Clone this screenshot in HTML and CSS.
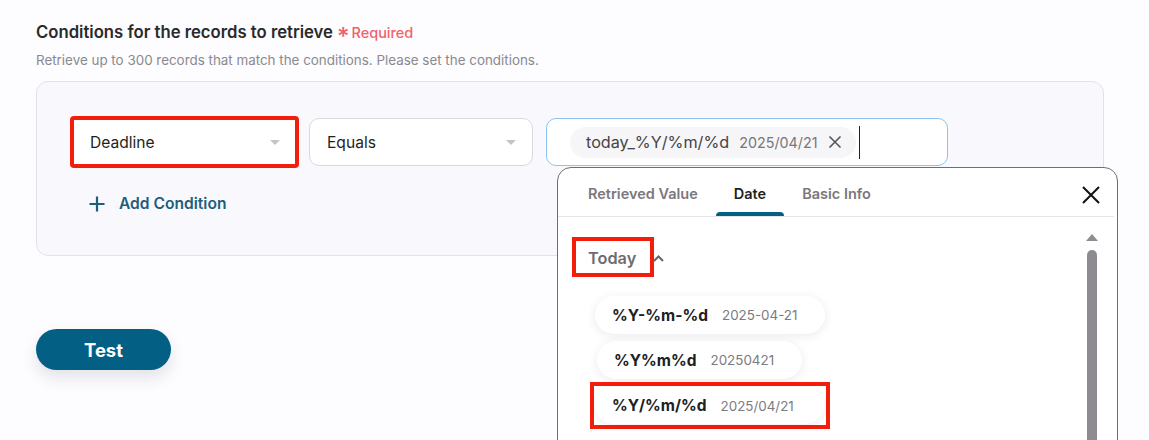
FILE: index.html
```html
<!DOCTYPE html>
<html lang="en">
<head>
<meta charset="utf-8">
<title>Conditions</title>
<link rel="stylesheet" href="styles.css">
</head>
<body>
<div class="page">
  <div class="heading">
    <span class="title">Conditions for the records to retrieve</span>
    <span class="required"><span class="star">*</span>Required</span>
  </div>
  <p class="sub">Retrieve up to 300 records that match the conditions. Please set the conditions.</p>

  <div class="box">
    <div class="row">
      <div class="select select-a highlight">
        <span>Deadline</span>
        <span class="caret"></span>
      </div>
      <div class="select select-b">
        <span>Equals</span>
        <span class="caret"></span>
      </div>
      <div class="value-input">
        <div class="token">
          <span class="token-name">today_%Y/%m/%d</span>
          <span class="token-val">2025/04/21</span>
          <svg class="token-x" width="14" height="14" viewBox="0 0 14 14"><path d="M1.5 1.5 L12.5 12.5 M12.5 1.5 L1.5 12.5" stroke="#555" stroke-width="1.6" fill="none"/></svg>
        </div>
        <span class="cursor"></span>
      </div>
    </div>
    <div class="add">
      <svg width="16" height="16" viewBox="0 0 16 16"><path d="M8 0.5 V15.5 M0.5 8 H15.5" stroke="#1d5e7c" stroke-width="2.2" fill="none"/></svg>
      <span>Add Condition</span>
    </div>
  </div>

  <button class="test">Test</button>

  <div class="popup">
    <div class="tabs">
      <div class="tab">Retrieved Value</div>
      <div class="tab active">Date</div>
      <div class="tab">Basic Info</div>
      <svg class="close" width="18" height="18" viewBox="0 0 18 18"><path d="M1 1 L17 17 M17 1 L1 17" stroke="#111" stroke-width="2" fill="none"/></svg>
    </div>
    <div class="pane">
      <div class="list">
        <div class="group">
          <span class="group-label highlight2">Today</span>
          <svg class="chev" width="11" height="7" viewBox="0 0 11 7"><path d="M1 6 L5.5 1.5 L10 6" stroke="#666" stroke-width="2" fill="none"/></svg>
        </div>
        <div class="chips">
          <div class="chip"><b>%Y-%m-%d</b><span>2025-04-21</span></div>
          <div class="chip"><b>%Y%m%d</b><span>20250421</span></div>
          <div class="chip-wrap"><div class="chip"><b>%Y/%m/%d</b><span>2025/04/21</span></div></div>
        </div>
      </div>
      <div class="scrollbar">
        <span class="arrow"></span>
        <span class="thumb"></span>
      </div>
    </div>
  </div>
</div>
</body>
</html>
```

FILE: styles.css
```css
* { box-sizing: border-box; }
html, body { margin: 0; padding: 0; }
body {
  background: #fdfcfe;
  font-family: Inter, "Noto Sans", sans-serif;
  color: #2b2b2b;
  width: 1149px;
  height: 440px;
  overflow: hidden;
}
.page {
  position: relative;
  padding: 22px 45px 0 36px;
  height: 440px;
}
.heading {
  display: flex;
  align-items: baseline;
  gap: 4px;
  height: 20px;
}
.title {
  font-size: 16.7px;
  font-weight: 600;
  color: #2a2a2c;
}
.required {
  font-size: 14.5px;
  font-weight: 500;
  color: #f2606a;
  display: flex;
  align-items: baseline;
}
.star {
  font-size: 24px;
  line-height: 10px;
  margin-right: 2px;
  position: relative;
  top: 7px;
}
.sub {
  margin: 10px 0 0 0;
  font-size: 13.4px;
  color: #8a8a8e;
  line-height: 16px;
}
.box {
  margin-top: 13px;
  width: 1068px;
  height: 175px;
  background: #f9f8fc;
  border: 1px solid #e3e2e7;
  border-radius: 12px;
  padding: 36px 0 0 35px;
}
.row {
  display: flex;
  gap: 12px;
}
.select {
  height: 48px;
  background: #fff;
  border: 1px solid #d9d8dc;
  border-radius: 10px;
  display: flex;
  align-items: center;
  justify-content: space-between;
  padding: 0 16px 0 17px;
  font-size: 15.6px;
  color: #1f1f22;
}
.select-a { width: 225px; }
.select-b { width: 224px; }
.highlight {
  outline: 4px solid #f31d0b;
  outline-offset: -2px;
  border-radius: 2px;
}
.caret {
  width: 0; height: 0;
  border-left: 5px solid transparent;
  border-right: 5px solid transparent;
  border-top: 5px solid #c4c4c8;
}
.value-input {
  margin-left: 1px;
  width: 402px;
  height: 48px;
  border: 1px solid #8dc3f3;
  border-radius: 10px;
  background: #fff;
  display: flex;
  align-items: center;
  padding-left: 23px;
}
.token {
  height: 31px;
  background: #f6f5f8;
  border-radius: 16px;
  display: flex;
  align-items: center;
  padding: 0 14px 0 16px;
}
.token-name {
  font-size: 16.2px;
  color: #444447;
}
.token-val {
  font-size: 14.3px;
  color: #77767b;
  margin-left: 10px;
}
.token-x { margin-left: 10px; }
.cursor {
  width: 1.5px;
  height: 33px;
  background: #222;
  margin-left: 3px;
}
.add {
  margin-top: 28px;
  margin-left: 17px;
  display: flex;
  align-items: center;
  gap: 14px;
  color: #1d5e7c;
  font-size: 15.6px;
  font-weight: 600;
}
.test {
  margin-top: 73px;
  width: 135px;
  height: 41px;
  border: none;
  border-radius: 21px;
  background: #035f84;
  color: #fff;
  font-family: Inter, sans-serif;
  font-size: 18.4px;
  font-weight: 700;
  box-shadow: 0 8px 16px rgba(40, 40, 80, 0.12);
  display: block;
}
.popup {
  position: absolute;
  left: 557px;
  top: 167px;
  width: 561px;
  height: 290px;
  background: #fff;
  border: 1px solid #6e6d72;
  border-radius: 14px;
  overflow: hidden;
}
.tabs {
  display: flex;
  align-items: flex-end;
  height: 49px;
  padding-left: 12px;
  border-bottom: 1px solid #e6e5ea;
  margin: 0 3px 0 0;
  position: relative;
}
.tab {
  padding: 0 18px;
  height: 48px;
  line-height: 52px;
  font-size: 14.5px;
  font-weight: 600;
  color: #7a787e;
  position: relative;
}
.tab.active { color: #1f1f22; }
.tab.active::after {
  content: "";
  position: absolute;
  left: 0; right: 0; bottom: 0;
  height: 4px;
  background: #035f84;
  border-radius: 4px 4px 0 0;
}
.close {
  position: absolute;
  right: 14px;
  top: 18px;
}
.pane {
  display: flex;
  justify-content: space-between;
  padding: 0 19px 0 14px;
}
.list { padding-top: 20px; }
.group {
  display: flex;
  align-items: center;
  gap: 0;
}
.group-label {
  display: inline-block;
  padding: 0 15px;
  height: 40px;
  line-height: 42px;
  font-size: 16.3px;
  font-weight: 600;
  color: #6d6c72;
}
.highlight2 {
  outline: 4px solid #f31d0b;
  outline-offset: -4px;
  width: 82px;
  padding-left: 16px;
}
.chev { margin-top: 2px; margin-left: -1px; }
.chips {
  margin-top: 19px;
  margin-left: 23px;
  display: flex;
  flex-direction: column;
  align-items: flex-start;
  gap: 7px;
}
.chip {
  height: 38px;
  background: #fff;
  border-radius: 19px;
  box-shadow: 0 2px 10px rgba(60, 50, 90, 0.10);
  display: flex;
  align-items: center;
  padding: 0 28px 0 17px;
  gap: 14px;
}
.chip:nth-child(2) { margin-left: 2px; padding-right: 28px; }
.chip b {
  font-size: 15.5px;
  font-weight: 700;
  color: #202024;
}
.chip span {
  font-size: 13.4px;
  color: #7b7a80;
}
.chip-wrap {
  margin-left: -5px;
  margin-top: -4px;
  border: 4px solid #f31d0b;
  padding: 1px 2px 1px 1px;
  background: #fff;
}
.chip-wrap .chip {
  padding-right: 30px;
  box-shadow: 0 2px 6px rgba(60, 50, 90, 0.08);
  height: 37px;
}
.scrollbar {
  width: 12px;
  display: flex;
  flex-direction: column;
  align-items: center;
  padding-top: 17px;
}
.arrow {
  width: 0; height: 0;
  border-left: 6px solid transparent;
  border-right: 6px solid transparent;
  border-bottom: 7px solid #8e8c91;
}
.thumb {
  margin-top: 9px;
  width: 10px;
  height: 240px;
  background: #8e8c91;
  border-radius: 5px;
}
```
